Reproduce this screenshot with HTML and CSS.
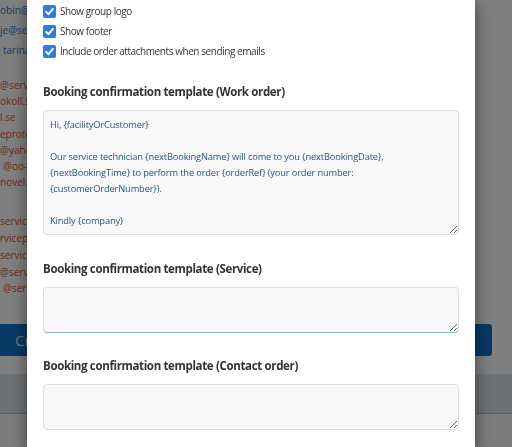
FILE: index.html
```html
<!DOCTYPE html>
<html lang="en">
<head>
    <meta charset="UTF-8">
    <meta name="viewport" content="width=device-width, initial-scale=1.0">
    <title>Group settings</title>
    <link rel="stylesheet" href="styles.css">
</head>
<body>
    <div class="page">
        <div class="contacts">
            <div class="contact-group contact-group--users">
                <div>obin@se</div>
                <div>je@ser</div>
                <div class="indent">tarina.s</div>
            </div>
            <div class="contact-group">
                <div>@servic</div>
                <div>okoll.se</div>
                <div>l.se</div>
                <div>eprotok</div>
                <div>@yahoo</div>
                <div class="indent">@oo-se</div>
                <div>novel.c</div>
            </div>
            <div class="contact-group contact-group--second">
                <div>servicep</div>
                <div>rvicepro</div>
                <div>servicep</div>
                <div>@servic</div>
                <div class="indent">@servi</div>
            </div>
        </div>
        <div class="actions">
            <button class="create-button">Create user</button>
        </div>
        <div class="footer-bar"></div>
    </div>

    <div class="backdrop"></div>

    <div class="modal">
        <div class="modal-body">
            <label class="check-row">
                <span class="check">
                    <svg viewBox="0 0 13 13" width="13" height="13"><path d="M3.2 6.9 L5.5 9.2 L9.9 3.9" /></svg>
                </span>
                Show group logo
            </label>
            <label class="check-row">
                <span class="check">
                    <svg viewBox="0 0 13 13" width="13" height="13"><path d="M3.2 6.9 L5.5 9.2 L9.9 3.9" /></svg>
                </span>
                Show footer
            </label>
            <label class="check-row">
                <span class="check">
                    <svg viewBox="0 0 13 13" width="13" height="13"><path d="M3.2 6.9 L5.5 9.2 L9.9 3.9" /></svg>
                </span>
                Include order attachments when sending emails
            </label>

            <div class="template-field template-field--first">
                <h3 class="template-title">Booking confirmation template (Work order)</h3>
                <textarea class="template-input template-input--long">Hi, {facilityOrCustomer}

Our service technician {nextBookingName} will come to you {nextBookingDate}, {nextBookingTime} to perform the order {orderRef} (your order number: {customerOrderNumber}).

Kindly {company}</textarea>
            </div>

            <div class="template-field">
                <h3 class="template-title">Booking confirmation template (Service)</h3>
                <textarea class="template-input template-input--short is-active"></textarea>
            </div>

            <div class="template-field template-field--tight">
                <h3 class="template-title">Booking confirmation template (Contact order)</h3>
                <textarea class="template-input template-input--short"></textarea>
            </div>
        </div>
    </div>
</body>
</html>
```

FILE: styles.css
```css
* {
    margin: 0;
    padding: 0;
    box-sizing: border-box;
}

body {
    font-family: 'Open Sans', 'Liberation Sans', sans-serif;
    color: #333;
    background: #fff;
    height: 100vh;
    overflow: hidden;
}

/* page behind the dialog */

.page {
    height: 100%;
    background: #f9f9f9;
}

.contacts {
    font-size: 10px;
    color: #d8553a;
    white-space: nowrap;
    background: #fff;
    padding-bottom: 27px;
}

.contact-group {
    line-height: 16.2px;
}

.contact-group--users {
    line-height: 20px;
    color: #3c7bc6;
    margin-bottom: 17px;
}

.contact-group--second {
    margin-top: 23px;
    line-height: 16.75px;
}

.indent {
    padding-left: 3px;
}

.actions {
    background: #fff;
    padding: 0 20px 18px 0;
}

.create-button {
    display: block;
    width: calc(100% + 10px);
    margin-left: -10px;
    height: 32px;
    border: none;
    border-radius: 3px;
    background: #0f73cc;
    color: #dce8f5;
    font-family: inherit;
    font-size: 15px;
    text-align: left;
    padding-left: 25px;
}

.footer-bar {
    height: 40px;
    background: #dbe3e9;
    border-bottom: 1px solid #b7b7b7;
}

/* dialog */

.backdrop {
    position: fixed;
    inset: 0;
    background: rgba(0, 0, 0, 0.5);
}

.modal {
    position: fixed;
    top: 0;
    bottom: 0;
    left: 27px;
    width: 448px;
    background: #fff;
    box-shadow: 0 5px 15px rgba(0, 0, 0, 0.5);
    overflow: hidden;
}

.modal-body {
    padding: 1px 16px 0;
}

.check-row {
    display: flex;
    align-items: center;
    gap: 4px;
    height: 20px;
    font-size: 10px;
    letter-spacing: -0.43px;
    color: #333;
}

.check {
    flex: none;
    width: 13px;
    height: 13px;
    border-radius: 2px;
    background: #2a7de6;
    display: flex;
}

.check path {
    fill: none;
    stroke: #fff;
    stroke-width: 2;
    stroke-linecap: round;
    stroke-linejoin: round;
}

.template-field {
    margin-top: 26px;
}

.template-field--first {
    margin-top: 23px;
}

.template-field--tight {
    margin-top: 25px;
}

.template-title {
    font-size: 11.5px;
    font-weight: 700;
    letter-spacing: -0.35px;
    line-height: 16px;
    color: #333;
    margin-bottom: 10px;
}

.template-input {
    display: block;
    width: 100%;
    padding: 6px;
    border: 1px solid #ddd;
    border-radius: 4px;
    background: #f8f8f8;
    color: #2d5382;
    font-family: 'Open Sans', 'Liberation Sans', sans-serif;
    font-size: 9.3px;
    letter-spacing: -0.15px;
    line-height: 16px;
    resize: vertical;
    overflow: hidden;
    outline: none;
}

.template-input--long {
    height: 125px;
}

.template-input--short {
    height: 46px;
}

.template-input.is-active {
    border-bottom-color: #8fb6e3;
}
```
